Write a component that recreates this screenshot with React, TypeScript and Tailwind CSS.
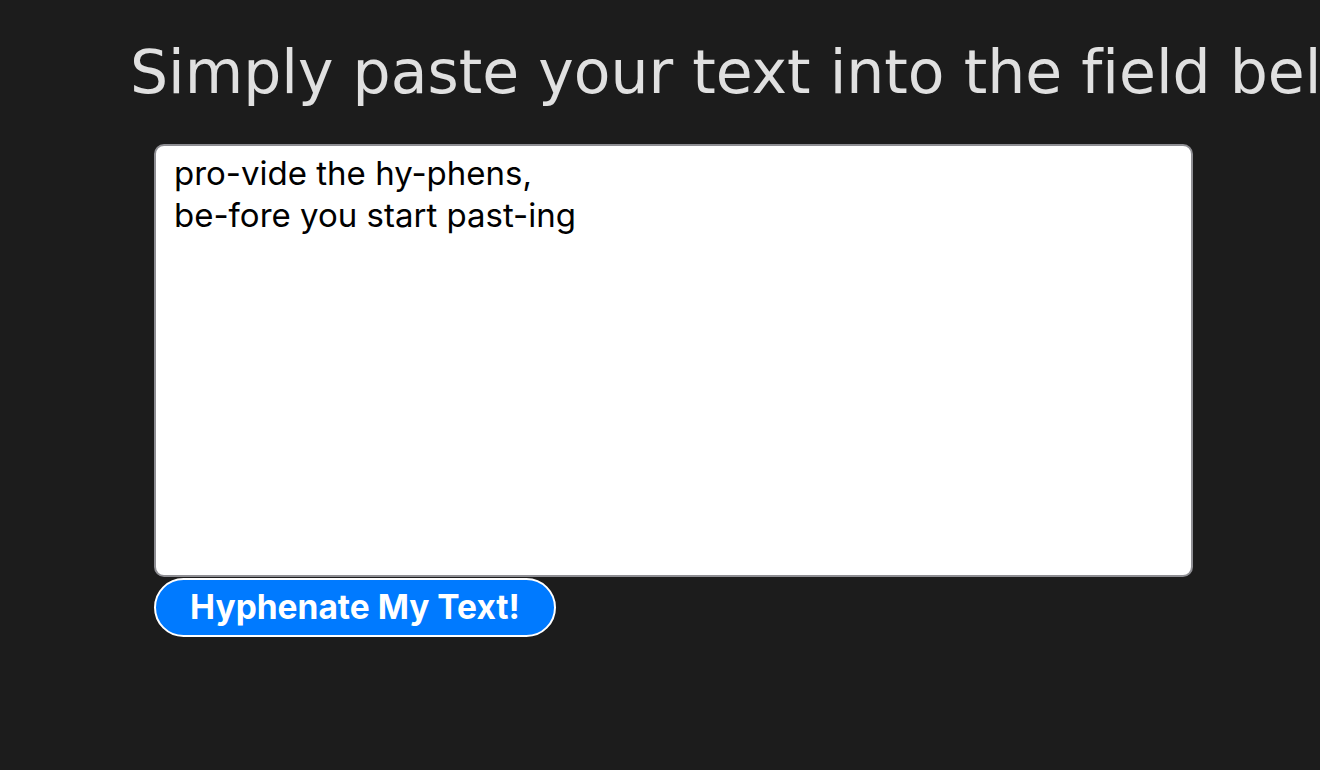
import { useState } from "react";

export default function App() {
  const [text, setText] = useState("pro-vide the hy-phens,\nbe-fore you start past-ing");

  return (
    <div className="min-h-screen w-full overflow-hidden bg-[#1c1c1c]">
      <h1 className="whitespace-nowrap pl-[130px] pt-[36px] font-['DejaVu_Sans',sans-serif] text-[60px] leading-[72px] text-[#e0e0e0] [font-variant-ligatures:none]">
        Simply paste your text into the field below.
      </h1>
      <div className="ml-[154px] mt-[36px] flex w-[1039px] flex-col items-start">
        <textarea
          value={text}
          onChange={(e) => setText(e.target.value)}
          className="h-[433px] w-full resize-none rounded-[10px] border-2 border-[#8e8e93] bg-white px-[18px] pt-[6px] pb-[8px] font-['Inter',sans-serif] text-[33px] leading-[42px] text-black outline-none"
        />
        <button
          type="button"
          className="mt-[1px] h-[59px] w-[402px] rounded-full border-2 border-white bg-[#007aff] font-['Inter',sans-serif] text-[33.5px] font-bold text-white"
        >
          Hyphenate My Text!
        </button>
      </div>
    </div>
  );
}
